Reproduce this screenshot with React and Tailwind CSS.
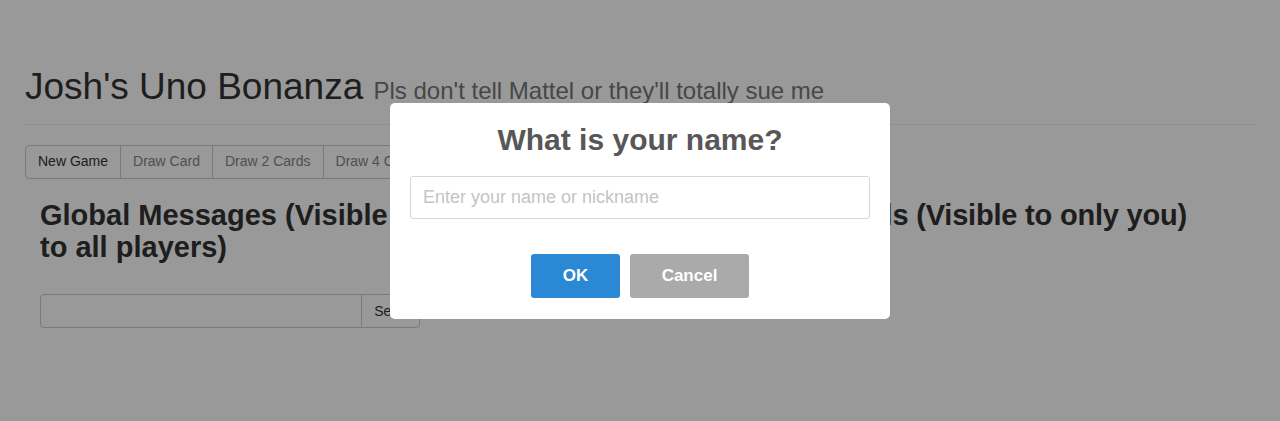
import React from 'react';

export default function App() {
    const buttons = [
        { label: 'New Game', disabled: false },
        { label: 'Draw Card', disabled: true },
        { label: 'Draw 2 Cards', disabled: true },
        { label: 'Draw 4 Cards', disabled: true },
        { label: 'Uno!', disabled: true },
    ];

    return (
        <div className="relative min-h-screen bg-white px-[25px] font-['Liberation_Sans',Arial,sans-serif] text-[#333]">
            {/* Header */}
            <div className="pt-[67px] pb-[16px] border-b border-[#eee]">
                <h1 className="text-[37px] leading-[1.1] whitespace-nowrap">
                    Josh's Uno Bonanza{' '}
                    <small className="text-[24px] text-[#777]">Pls don't tell Mattel or they'll totally sue me</small>
                </h1>
            </div>

            {/* Button group */}
            <div className="mt-5 flex">
                {buttons.map((b, idx) => (
                    <button
                        key={idx}
                        className={
                            'h-[34px] px-3 text-[14px] border border-[#ccc] bg-white -ml-px first:ml-0 first:rounded-l-[4px] last:rounded-r-[4px] ' +
                            (b.disabled ? 'text-[#858585]' : 'text-[#333]')
                        }
                    >
                        {b.label}
                    </button>
                ))}
            </div>

            {/* Columns */}
            <div className="flex px-[15px]">
                <div className="w-[380px] shrink-0">
                    <h2 className="mt-[21px] text-[29px] font-bold leading-[1.1] text-[#333]">
                        Global Messages (Visible to all players)
                    </h2>
                    <div className="mt-[31px] flex h-[34px]">
                        <input className="flex-1 min-w-0 border border-[#ccc] rounded-l-[4px] px-3 text-[14px]" />
                        <button className="w-[59px] -ml-px border border-[#ccc] rounded-r-[4px] bg-white text-[14px] text-[#333]">
                            Send
                        </button>
                    </div>
                </div>
                <div className="ml-auto mr-[53px]">
                    <h2 className="mt-[21px] text-[29px] font-bold leading-[1.1] tracking-[-0.2px] whitespace-nowrap text-[#333]">
                        Your Hand and Game Details (Visible to only you)
                    </h2>
                </div>
            </div>

            {/* Overlay + dialog */}
            <div className="fixed inset-0 bg-black/40 flex items-center justify-center">
                <div className="w-[500px] h-[216px] bg-white rounded-[5px] px-5 pt-[17px] text-center">
                    <h2 className="text-[30px] font-bold leading-[40px] text-[#575757]">What is your name?</h2>
                    <input
                        placeholder="Enter your name or nickname"
                        className="mt-[16px] block w-full h-[43px] border border-[#d7d7d7] rounded-[3px] px-3 text-[18px] placeholder:text-[#c4c4c4] outline-none"
                    />
                    <div className="mt-[35px] flex justify-center gap-[10px]">
                        <button className="w-[89px] h-[44px] rounded-[3px] bg-[#2b88d4] text-white text-[17px] font-bold">OK</button>
                        <button className="w-[119px] h-[44px] rounded-[3px] bg-[#aaaaaa] text-white text-[17px] font-bold">Cancel</button>
                    </div>
                </div>
            </div>
        </div>
    );
}
